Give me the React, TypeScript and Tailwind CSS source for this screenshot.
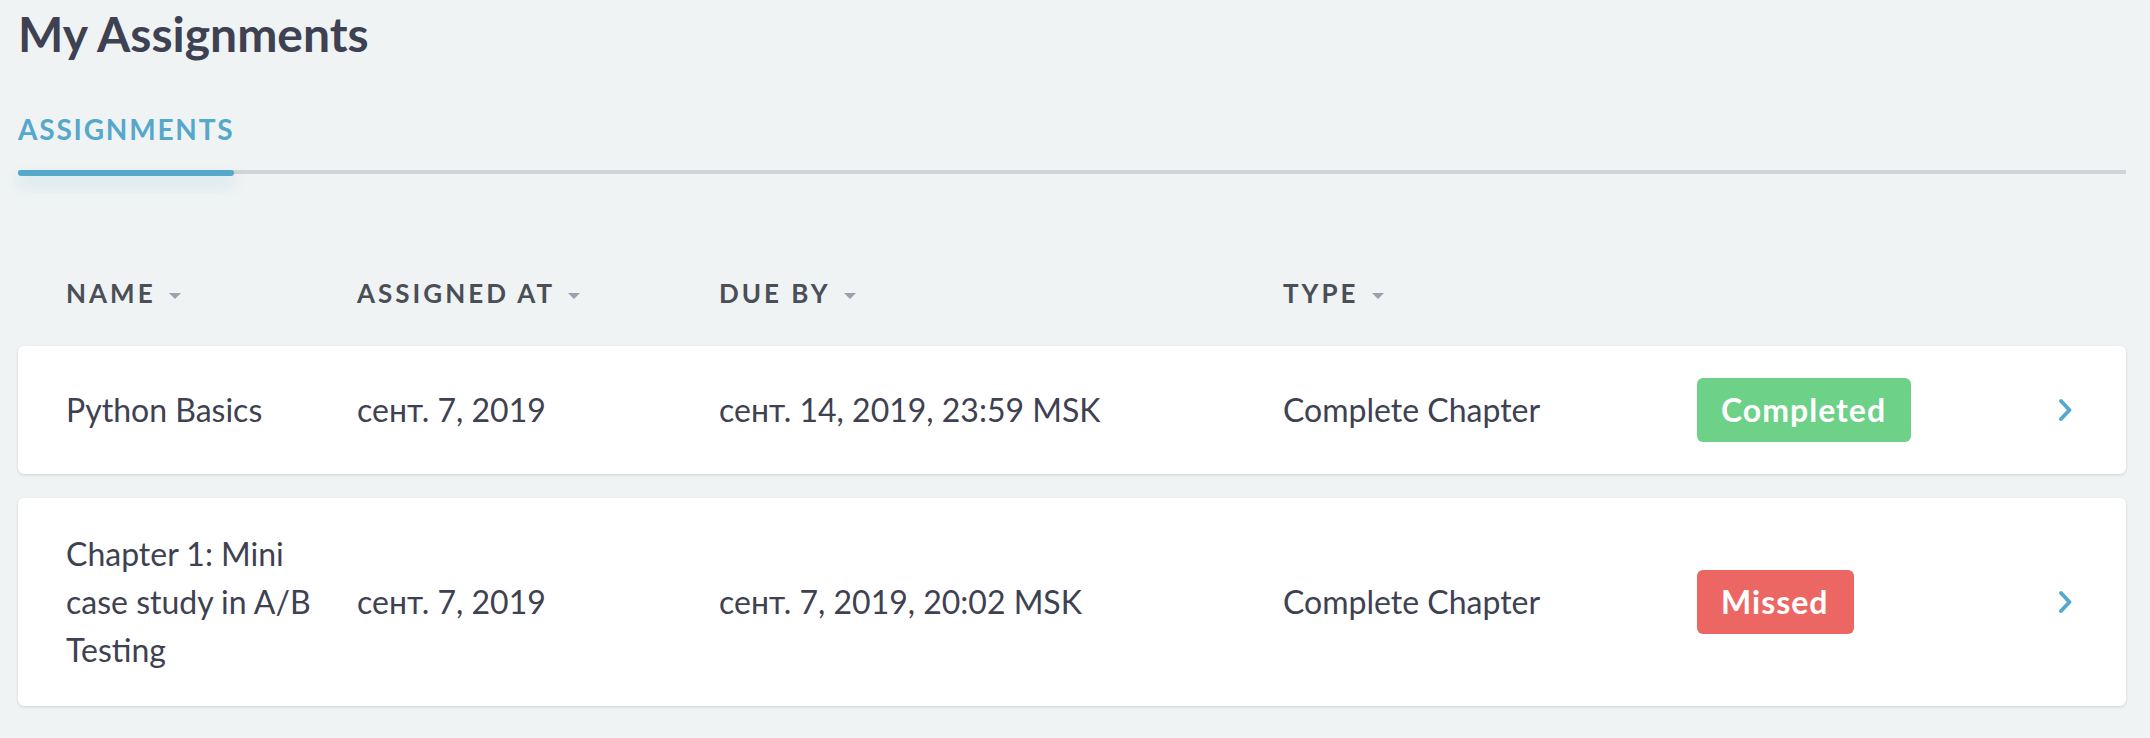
import { ChevronRight } from "lucide-react";

type Row = {
  name: string;
  assigned: string;
  due: string;
  type: string;
  status: "Completed" | "Missed";
};

const rows: Row[] = [
  {
    name: "Python Basics",
    assigned: "сент. 7, 2019",
    due: "сент. 14, 2019, 23:59 MSK",
    type: "Complete Chapter",
    status: "Completed",
  },
  {
    name: "Chapter 1: Mini case study in A/B Testing",
    assigned: "сент. 7, 2019",
    due: "сент. 7, 2019, 20:02 MSK",
    type: "Complete Chapter",
    status: "Missed",
  },
];

const cols = "grid grid-cols-[291px_362px_564px_414px_1fr_auto] items-center";

function Caret() {
  return (
    <svg width="12" height="6" viewBox="0 0 12 6" className="ml-[13px] mt-[6px]">
      <path d="M0 0 L12 0 L6 6 Z" fill="#9ea1ab" />
    </svg>
  );
}

function HeaderCell({ label }: { label: string }) {
  return (
    <div className="flex items-center">
      <span>{label}</span>
      <Caret />
    </div>
  );
}

function StatusBadge({ status }: { status: Row["status"] }) {
  const color = status === "Completed" ? "bg-[#6dd187]" : "bg-[#ec6764]";
  return (
    <span
      className={`inline-flex h-[64px] items-center rounded-[6px] pl-[24px] pr-[25px] text-[32px] font-bold tracking-[1px] text-white ${color}`}
    >
      {status}
    </span>
  );
}

export default function App() {
  return (
    <div className="min-h-screen bg-[#eff3f4] pl-[18px] pr-[24px] font-['Lato',sans-serif]">
      <h1 className="pt-[5px] text-[48px] font-bold leading-[58px] text-[#3d4152]">My Assignments</h1>

      <div className="mt-[49px] border-b-[4px] border-[#d1d3d8]">
        <div className="relative inline-block w-[216px] pb-[24px]">
          <span className="text-[28px] font-bold leading-[34px] tracking-[1.8px] text-[#55a8ca]">
            ASSIGNMENTS
          </span>
          <div className="absolute left-0 right-0 bottom-[-6px] h-[6px] rounded-full bg-[#55a8ca] shadow-[0_8px_14px_rgba(85,168,202,0.25)]" />
        </div>
      </div>

      <div className={`${cols} mt-[104px] pl-[48px] text-[26px] font-bold leading-[30px] tracking-[3px] text-[#4a4e57]`}>
        <HeaderCell label="NAME" />
        <HeaderCell label="ASSIGNED AT" />
        <HeaderCell label="DUE BY" />
        <HeaderCell label="TYPE" />
        <div />
        <div />
      </div>

      <div className="mt-[38px] flex flex-col gap-[24px]">
        {rows.map((row) => (
          <div
            key={row.name}
            className={`${cols} rounded-[6px] bg-white py-[32px] pl-[48px] pr-[52px] text-[32px] leading-[48px] text-[#3e4151] shadow-[0_1px_3px_rgba(0,0,0,0.14)]`}
          >
            <div className="pr-[28px]">{row.name}</div>
            <div>{row.assigned}</div>
            <div>{row.due}</div>
            <div>{row.type}</div>
            <div>
              <StatusBadge status={row.status} />
            </div>
            <svg width="17" height="26" viewBox="0 0 17 26" fill="none">
              <path d="M4 4 L12.5 13 L4 22" stroke="#56a9cc" strokeWidth="4" strokeLinecap="round" strokeLinejoin="round" />
            </svg>
          </div>
        ))}
      </div>
    </div>
  );
}
